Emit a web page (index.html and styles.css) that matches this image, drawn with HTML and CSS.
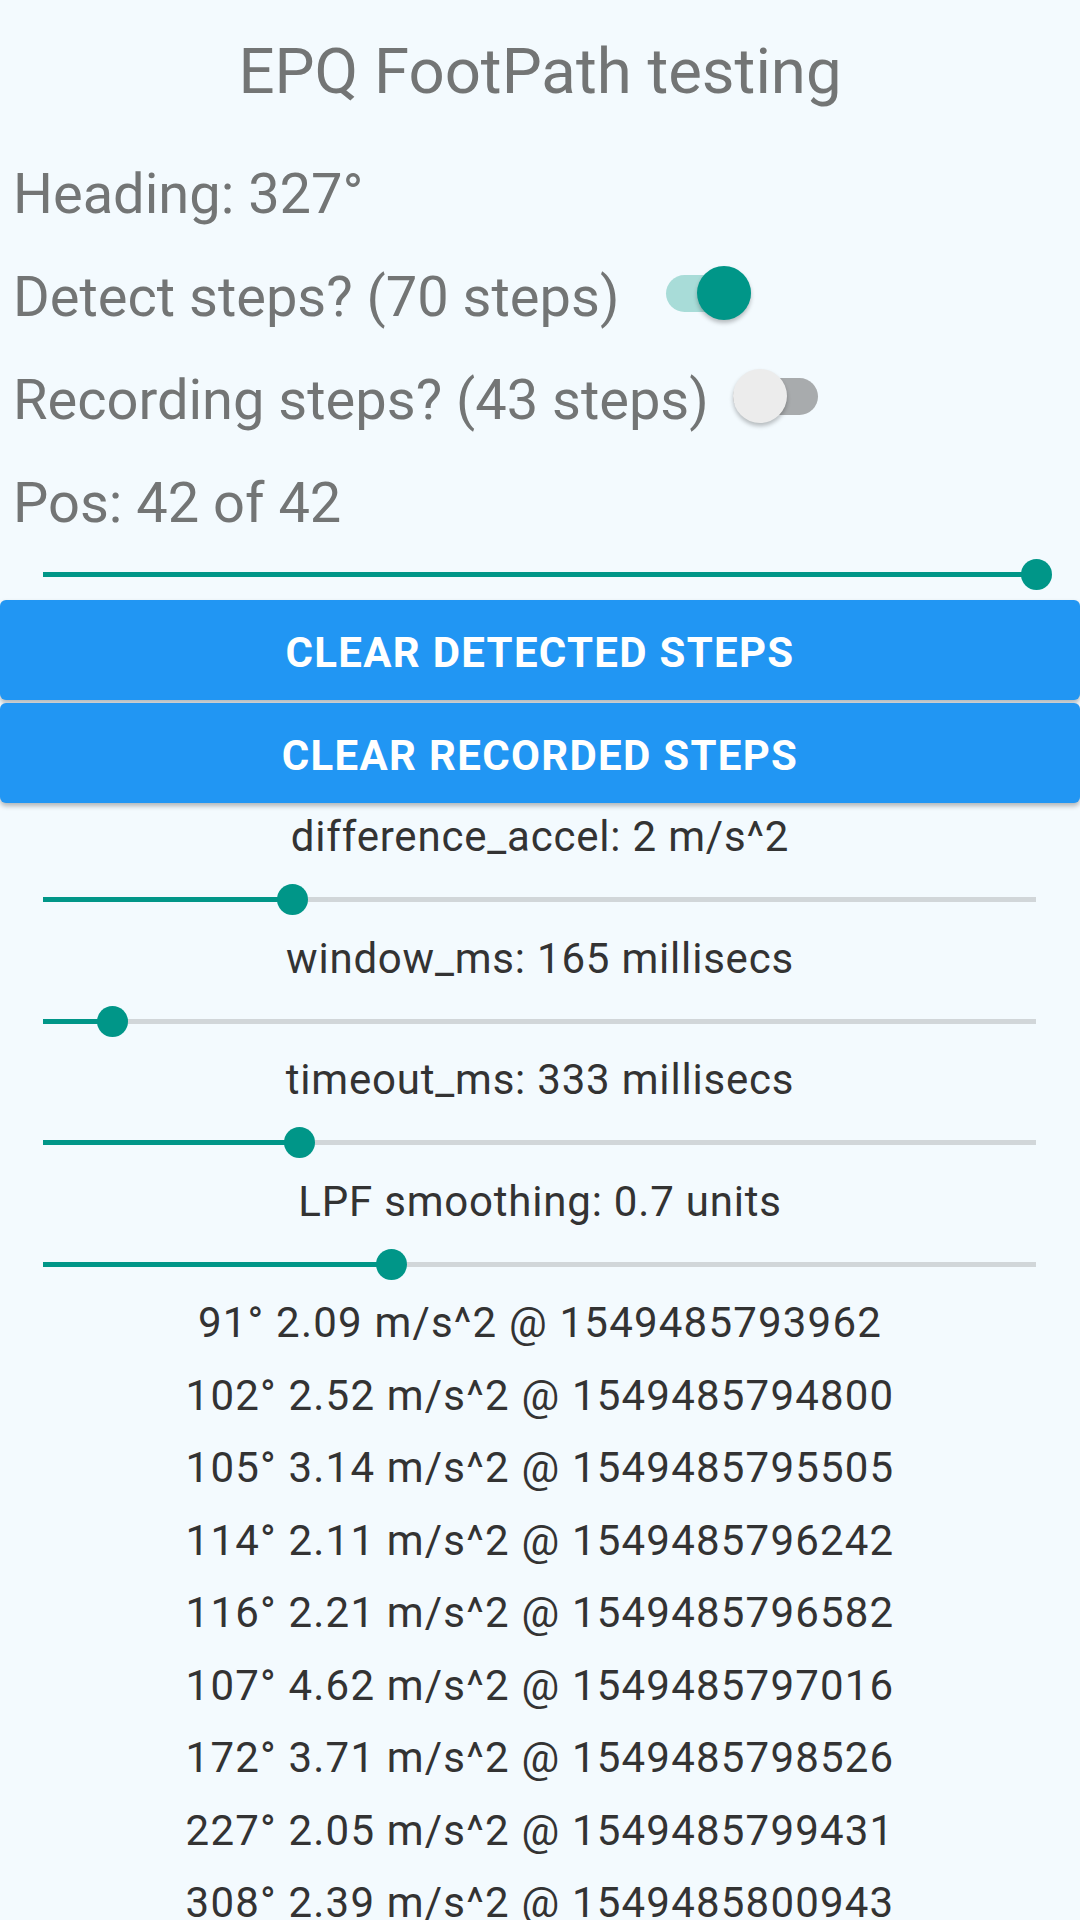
FILE: index.html
```html
<!DOCTYPE html>
<html>
<head>
<meta charset="utf-8">
<link rel="stylesheet" href="styles.css">
</head>
<body>
<div class="app">
  <h1 class="title">EPQ FootPath testing</h1>
  <div class="row"><span class="label">Heading: 327°</span></div>
  <div class="row">
    <span class="label">Detect steps? (70 steps)</span>
    <span class="switch on gap-wide"><span class="track"></span><span class="thumb"></span></span>
  </div>
  <div class="row">
    <span class="label">Recording steps? (43 steps)</span>
    <span class="switch off gap-narrow"><span class="track"></span><span class="thumb"></span></span>
  </div>
  <div class="row"><span class="label">Pos: 42 of 42</span></div>
  <div class="slider pos-slider">
    <div class="bar"><div class="fill" style="width:100%"></div><div class="knob" style="left:100%"></div></div>
  </div>
  <div class="buttons">
    <button class="btn">CLEAR DETECTED STEPS</button>
    <button class="btn">CLEAR RECORDED STEPS</button>
  </div>
  <div class="param">
    <div class="param-label">difference_accel: 2 m/s^2</div>
    <div class="slider"><div class="bar"><div class="fill" style="width:25.1%"></div><div class="knob" style="left:25.1%"></div></div></div>
  </div>
  <div class="param">
    <div class="param-label">window_ms: 165 millisecs</div>
    <div class="slider"><div class="bar"><div class="fill" style="width:7%"></div><div class="knob" style="left:7%"></div></div></div>
  </div>
  <div class="param">
    <div class="param-label">timeout_ms: 333 millisecs</div>
    <div class="slider"><div class="bar"><div class="fill" style="width:25.8%"></div><div class="knob" style="left:25.8%"></div></div></div>
  </div>
  <div class="param">
    <div class="param-label">LPF smoothing: 0.7 units</div>
    <div class="slider"><div class="bar"><div class="fill" style="width:35.1%"></div><div class="knob" style="left:35.1%"></div></div></div>
  </div>
  <ul class="log">
    <li>91° 2.09 m/s^2 @ 1549485793962</li>
    <li>102° 2.52 m/s^2 @ 1549485794800</li>
    <li>105° 3.14 m/s^2 @ 1549485795505</li>
    <li>114° 2.11 m/s^2 @ 1549485796242</li>
    <li>116° 2.21 m/s^2 @ 1549485796582</li>
    <li>107° 4.62 m/s^2 @ 1549485797016</li>
    <li>172° 3.71 m/s^2 @ 1549485798526</li>
    <li>227° 2.05 m/s^2 @ 1549485799431</li>
    <li>308° 2.39 m/s^2 @ 1549485800943</li>
  </ul>
</div>
</body>
</html>
```

FILE: styles.css
```css
html, body {
  margin: 0;
  padding: 0;
  background: #f3fafe;
}
body {
  font-family: Roboto, "Noto Sans", sans-serif;
  width: 1080px;
  height: 1920px;
  overflow: hidden;
}
.app {
  display: flex;
  flex-direction: column;
}
.title {
  margin: 0;
  height: 143px;
  line-height: 143px;
  font-size: 63.5px;
  font-weight: 400;
  color: #737575;
  text-align: center;
}
.row {
  height: 103px;
  display: flex;
  align-items: center;
  padding-left: 13px;
}
.label {
  font-size: 56px;
  line-height: 103px;
  color: #737575;
  white-space: nowrap;
}
.switch {
  position: relative;
  width: 85px;
  height: 54px;
  margin-bottom: 9px;
  flex: none;
}
.gap-wide { margin-left: 47px; }
.gap-narrow { margin-left: 24px; }
.switch .track {
  position: absolute;
  left: 0;
  right: 0;
  top: 9px;
  height: 37px;
  border-radius: 19px;
}
.switch .thumb {
  position: absolute;
  top: 0;
  width: 54px;
  height: 54px;
  border-radius: 50%;
  box-shadow: 0 3px 4px rgba(0, 0, 0, 0.25);
}
.switch.on .track { background: #a8dcd8; }
.switch.on .thumb { right: 0; background: #009688; }
.switch.off .track { background: #a8abad; }
.switch.off .thumb { left: 0; background: #ececec; }

.slider {
  display: flex;
  align-items: center;
  padding: 0 44px 0 43px;
  height: 49.5px;
}
.pos-slider {
  height: 38px;
  margin-bottom: 7px;
}
.bar {
  position: relative;
  flex: 1;
  height: 5px;
  background: #d1d6d9;
}
.fill {
  height: 100%;
  background: #009688;
}
.knob {
  position: absolute;
  top: 50%;
  width: 31px;
  height: 31px;
  margin: -15.5px 0 0 -15.5px;
  border-radius: 50%;
  background: #009688;
}
.buttons {
  display: flex;
  flex-direction: column;
  gap: 3px;
}
.btn {
  height: 100px;
  width: 100%;
  border: none;
  border-radius: 6px;
  background: #2196f3;
  color: #ffffff;
  font-family: Roboto, "Noto Sans", sans-serif;
  font-size: 42px;
  font-weight: 700;
  letter-spacing: 1.3px;
  box-shadow: 0 3px 5px rgba(0, 0, 0, 0.28);
  padding: 5px 0 0;
}
.param {
  display: flex;
  flex-direction: column;
}
.param-label {
  padding-top: 4px;
  line-height: 60px;
  font-size: 42px;
  letter-spacing: 0.8px;
  color: #333333;
  text-align: center;
  margin-bottom: 8px;
}
.log {
  list-style: none;
  margin: -2px 0 0;
  padding: 0;
}
.log li {
  line-height: 72.5px;
  font-size: 42px;
  letter-spacing: 1.2px;
  color: #333333;
  text-align: center;
}
```
